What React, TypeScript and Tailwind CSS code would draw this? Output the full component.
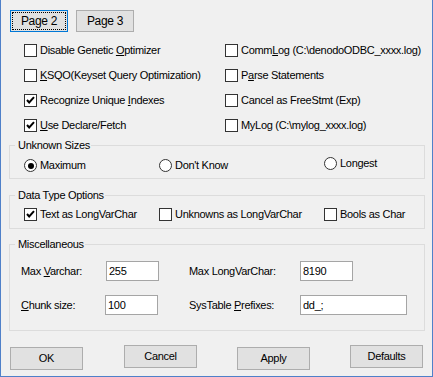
import React from "react";

function CheckBox({ checked, children }: { checked?: boolean; children: React.ReactNode }) {
  return (
    <div className="flex items-center gap-[3px] h-[13px]">
      <span className="w-[13px] h-[13px] shrink-0 border border-[#333333] bg-white flex items-center justify-center">
        {checked && (
          <svg width="11" height="11" viewBox="0 0 11 11">
            <path d="M2 5 L4.2 7.5 L9 2.2" stroke="#000" strokeWidth="2" fill="none" />
          </svg>
        )}
      </span>
      <span className="leading-[13px] whitespace-nowrap">{children}</span>
    </div>
  );
}

function Radio({ checked, children }: { checked?: boolean; children: React.ReactNode }) {
  return (
    <div className="flex items-center gap-[3px] h-[13px]">
      <span className="w-[13px] h-[13px] shrink-0 rounded-full border border-[#333333] bg-white flex items-center justify-center">
        {checked && <span className="w-[6px] h-[6px] rounded-full bg-black" />}
      </span>
      <span className="leading-[13px] whitespace-nowrap">{children}</span>
    </div>
  );
}

function Btn({ children, className = "" }: { children: React.ReactNode; className?: string }) {
  return (
    <button className={`w-[73px] h-[23px] shrink-0 border border-[#adadad] bg-[#e1e1e1] leading-[13px] ${className}`}>
      {children}
    </button>
  );
}

function Group({ title, className = "", children }: { title: string; className?: string; children: React.ReactNode }) {
  return (
    <fieldset className={`ml-[8px] w-[416px] border border-[#dcdcdc] px-0 ${className}`}>
      <legend className="ml-[5px] pl-[3px] pr-[1px] leading-[13px]">{title}</legend>
      {children}
    </fieldset>
  );
}

function Field({ value, className = "" }: { value: string; className?: string }) {
  return (
    <input
      readOnly
      defaultValue={value}
      className={`h-[20px] border border-[#a5a5a5] bg-white pl-[2px] leading-[13px] outline-none ${className}`}
    />
  );
}

export default function App() {
  return (
    <div className="w-[433px] h-[377px] bg-[#f0f0f0] border-x border-b border-[#4f80c9] text-black text-[11px] tracking-[-0.3px] font-['Liberation_Sans',Arial,sans-serif]">
      {/* page tabs */}
      <div className="flex gap-[8px] pt-[10px] pl-[9px]">
        <button className="relative w-[58px] h-[22px] border border-[#0078d7] bg-[#e1e1e1] text-[12px]">
          <span className="absolute inset-[1px] border border-dotted border-black" />
          Page 2
        </button>
        <button className="w-[58px] h-[22px] border border-[#adadad] bg-[#e1e1e1] text-[12px]">Page 3</button>
      </div>

      {/* option checkboxes */}
      <div className="grid grid-cols-[201px_1fr] gap-y-[12px] mt-[12px] pl-[23px]">
        <CheckBox>
          Disable Genetic <u>O</u>ptimizer
        </CheckBox>
        <CheckBox>
          Comm<u>L</u>og (C:\denodoODBC_xxxx.log)
        </CheckBox>
        <CheckBox>
          <u>K</u>SQO(Keyset Query Optimization)
        </CheckBox>
        <CheckBox>
          P<u>a</u>rse Statements
        </CheckBox>
        <CheckBox checked>
          Recognize Unique <u>I</u>ndexes
        </CheckBox>
        <CheckBox>Cancel as FreeStmt (Exp)</CheckBox>
        <CheckBox checked>
          <u>U</u>se Declare/Fetch
        </CheckBox>
        <CheckBox>MyLog (C:\mylog_xxxx.log)</CheckBox>
      </div>

      <Group title="Unknown Sizes" className="mt-[7px] pt-[7px] pb-[6px]">
        <div className="flex items-start pl-[14px]">
          <div className="w-[135px]">
            <Radio checked>Maximum</Radio>
          </div>
          <div className="w-[165px]">
            <Radio>Don't Know</Radio>
          </div>
          <div className="-mt-[2px]">
            <Radio>Longest</Radio>
          </div>
        </div>
      </Group>

      <Group title="Data Type Options" className="mt-[10px] pt-[6px] pb-[7px]">
        <div className="flex items-center pl-[14px]">
          <div className="w-[135px]">
            <CheckBox checked>Text as LongVarChar</CheckBox>
          </div>
          <div className="w-[165px]">
            <CheckBox>Unknowns as LongVarChar</CheckBox>
          </div>
          <CheckBox>Bools as Char</CheckBox>
        </div>
      </Group>

      <Group title="Miscellaneous" className="mt-[9px] pt-[10px] pb-[15px]">
        <div className="flex flex-col gap-[14px] pl-[11px]">
          <div className="flex items-center">
            <span className="w-[85px]">
              Max <u>V</u>archar:
            </span>
            <Field value="255" className="w-[53px]" />
            <span className="ml-[30px] w-[111px]">Max LongVarChar:</span>
            <Field value="8190" className="w-[53px]" />
          </div>
          <div className="flex items-center">
            <span className="w-[84px]">
              <u>C</u>hunk size:
            </span>
            <Field value="100" className="w-[53px]" />
            <span className="ml-[31px] w-[111px]">
              SysTable <u>P</u>refixes:
            </span>
            <Field value="dd_;" className="w-[107px]" />
          </div>
        </div>
      </Group>

      {/* dialog buttons */}
      <div className="flex items-start pl-[9px]">
        <Btn className="mt-[16px]">OK</Btn>
        <Btn className="mt-[14px] ml-[41px]">Cancel</Btn>
        <Btn className="mt-[16px] ml-[40px]">Apply</Btn>
        <Btn className="mt-[14px] ml-[40px]">Defaults</Btn>
      </div>
    </div>
  );
}
